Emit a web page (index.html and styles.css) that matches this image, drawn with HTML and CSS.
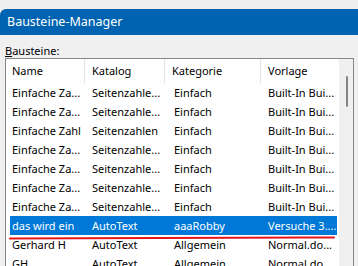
FILE: index.html
```html
<!DOCTYPE html>
<html lang="de">
<head>
<meta charset="utf-8">
<title>Bausteine-Manager</title>
<link rel="stylesheet" href="styles.css">
</head>
<body>
<div class="window">
  <div class="topstrip"></div>
  <div class="titlebar">Bausteine-Manager</div>
  <div class="content">
    <div class="label"><span class="ul">B</span>austeine:</div>
    <div class="listbox">
      <div class="list">
        <div class="row head">
          <div class="cell c1">Name</div>
          <div class="cell c2">Katalog</div>
          <div class="cell c3">Kategorie</div>
          <div class="cell c4">Vorlage</div>
        </div>
        <div class="row"><div class="cell c1">Einfache Za...</div><div class="cell c2">Seitenzahle...</div><div class="cell c3">Einfach</div><div class="cell c4">Built-In Bui...</div></div>
        <div class="row"><div class="cell c1">Einfache Za...</div><div class="cell c2">Seitenzahle...</div><div class="cell c3">Einfach</div><div class="cell c4">Built-In Bui...</div></div>
        <div class="row"><div class="cell c1">Einfache Zahl</div><div class="cell c2">Seitenzahlen</div><div class="cell c3">Einfach</div><div class="cell c4">Built-In Bui...</div></div>
        <div class="row"><div class="cell c1">Einfache Za...</div><div class="cell c2">Seitenzahle...</div><div class="cell c3">Einfach</div><div class="cell c4">Built-In Bui...</div></div>
        <div class="row"><div class="cell c1">Einfache Za...</div><div class="cell c2">Seitenzahle...</div><div class="cell c3">Einfach</div><div class="cell c4">Built-In Bui...</div></div>
        <div class="row"><div class="cell c1">Einfache Za...</div><div class="cell c2">Seitenzahle...</div><div class="cell c3">Einfach</div><div class="cell c4">Built-In Bui...</div></div>
        <div class="row"><div class="cell c1">Einfache Za...</div><div class="cell c2">Seitenzahle...</div><div class="cell c3">Einfach</div><div class="cell c4">Built-In Bui...</div></div>
        <div class="row selected"><div class="cell c1">das wird ein</div><div class="cell c2">AutoText</div><div class="cell c3">aaaRobby</div><div class="cell c4">Versuche 3....</div></div>
        <div class="row"><div class="cell c1">Gerhard H</div><div class="cell c2">AutoText</div><div class="cell c3">Allgemein</div><div class="cell c4">Normal.do...</div></div>
        <div class="row"><div class="cell c1">GH</div><div class="cell c2">AutoText</div><div class="cell c3">Allgemein</div><div class="cell c4">Normal.do...</div></div>
      </div>
      <div class="scrollbar"><div class="thumb"></div></div>
    </div>
  </div>
  <svg class="redline" width="358" height="266" viewBox="0 0 358 266">
    <path d="M10 238.5 C 60 238, 200 237.8, 334 237.4" stroke="#e3151a" stroke-width="2" fill="none" stroke-linecap="round"/>
  </svg>
</div>
</body>
</html>
```
FILE: styles.css
```css
html, body {
  margin: 0;
  padding: 0;
}
body {
  width: 358px;
  height: 266px;
  overflow: hidden;
  background: #f0f0f0;
  font-family: "Noto Sans", "Open Sans", sans-serif;
  font-size: 11px;
  color: #000;
}
.window {
  position: relative;
  width: 358px;
  height: 266px;
  display: flex;
  flex-direction: column;
}
.topstrip {
  height: 9px;
  background: #efefef;
  flex: none;
}
.titlebar {
  flex: none;
  height: 26px;
  background: #0063b1;
  color: #fff;
  font-size: 12.5px;
  line-height: 26px;
  padding-left: 7px;
  border-top-left-radius: 6px;
}
.content {
  flex: 1;
  display: flex;
  flex-direction: column;
  padding: 8px 4px 0 5px;
  min-height: 0;
}
.label {
  height: 15px;
  line-height: 16px;
}
.ul {
  text-decoration: underline;
}
.listbox {
  flex: 1;
  border: 1px solid #828790;
  border-bottom: none;
  background: #fff;
  display: flex;
  min-height: 0;
}
.list {
  flex: 1;
  min-width: 0;
}
.row {
  display: grid;
  grid-template-columns: 79px 80px 96px 78px;
  height: 19px;
  line-height: 19px;
  white-space: nowrap;
}
.row.head {
  height: 24px;
  line-height: 24px;
}
.cell {
  padding-left: 7px;
  overflow: hidden;
}
.c1 {
  padding-left: 6px;
}
.head .cell {
  border-right: 1px solid #e5e5e5;
}
.head .c4 {
  border-right: none;
}
.row .c3 {
  padding-left: 9px;
}
.head .c3 {
  padding-left: 7px;
}
.row.selected {
  background: linear-gradient(#0078d7, #0078d7) 4px 0 / 327px 100% no-repeat;
  color: #fff;
}
.scrollbar {
  width: 14px;
  flex: none;
  background: #f0f0f0;
  position: relative;
}
.thumb {
  position: absolute;
  left: 7px;
  top: 17px;
  width: 2px;
  height: 31px;
  border-radius: 1px;
  background: #858585;
}
.redline {
  position: absolute;
  left: 0;
  top: 0;
  pointer-events: none;
}
```
